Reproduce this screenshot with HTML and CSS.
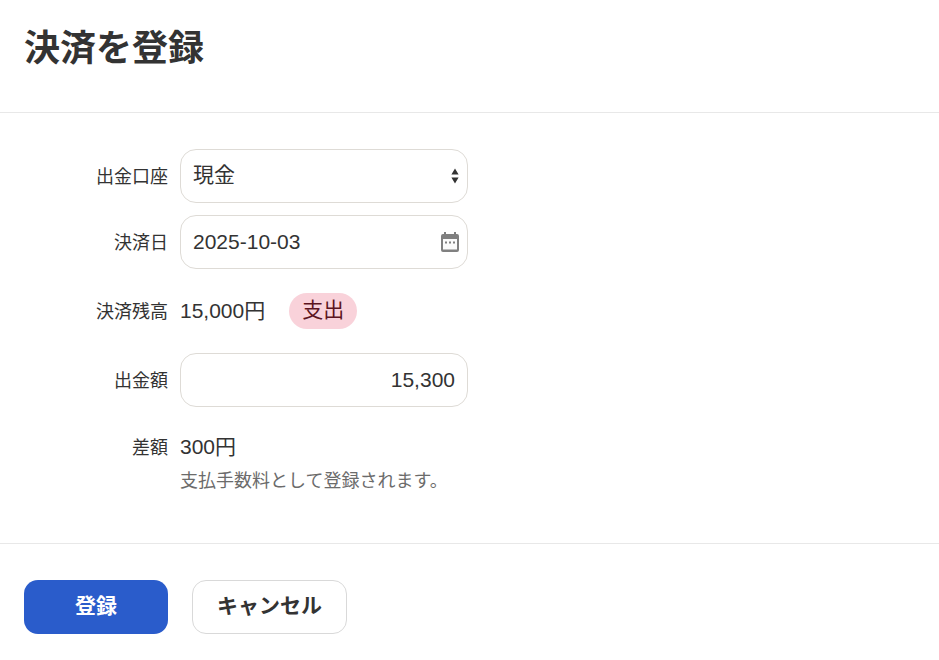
FILE: index.html
```html
<!DOCTYPE html>
<html lang="ja">
<head>
    <meta charset="UTF-8">
    <meta name="viewport" content="width=device-width, initial-scale=1.0">
    <title>決済を登録</title>
    <link rel="stylesheet" href="styles.css">
</head>
<body>
    <header class="page-header">
        <h1>決済を登録</h1>
    </header>
    <form class="form-body">
        <div class="row">
            <label class="row-label" for="account">出金口座</label>
            <div class="field">
                <select id="account" class="control control-select">
                    <option>現金</option>
                </select>
                <svg class="field-icon select-icon" width="8" height="16" viewBox="0 0 8 16">
                    <path d="M4 0.5 L7.6 6.5 H0.4 Z M0.4 9.5 H7.6 L4 15.5 Z" fill="#333"/>
                </svg>
            </div>
        </div>
        <div class="row">
            <label class="row-label" for="date">決済日</label>
            <div class="field">
                <input id="date" class="control" type="text" value="2025-10-03">
                <svg class="field-icon date-icon" width="18" height="20" viewBox="0 0 18 20">
                    <path d="M3 0 H5 V2 H13 V0 H15 V2 H16 A2 2 0 0 1 18 4 V18 A2 2 0 0 1 16 20 H2 A2 2 0 0 1 0 18 V4 A2 2 0 0 1 2 2 H3 Z" fill="#808080"/>
                    <path d="M2 7 H16 V17.5 H2 Z" fill="#fbfbfb"/>
                    <path d="M4 9.5 H6 V11.5 H4 Z M8 9.5 H10 V11.5 H8 Z M12 9.5 H14 V11.5 H12 Z" fill="#808080"/>
                </svg>
            </div>
        </div>
        <div class="row row-balance">
            <span class="row-label">決済残高</span>
            <span class="value">15,000円</span>
            <span class="badge">支出</span>
        </div>
        <div class="row">
            <label class="row-label" for="amount">出金額</label>
            <div class="field">
                <input id="amount" class="control amount" type="text" value="15,300">
            </div>
        </div>
        <div class="row row-diff">
            <span class="row-label">差額</span>
            <div>
                <div class="value">300円</div>
                <div class="help">支払手数料として登録されます。</div>
            </div>
        </div>
    </form>
    <footer class="page-footer">
        <button class="btn btn-primary" type="button">登録</button>
        <button class="btn btn-cancel" type="button">キャンセル</button>
    </footer>
</body>
</html>
```

FILE: styles.css
```css
body {
    margin: 0;
    font-family: "Liberation Sans", "Noto Sans CJK JP", sans-serif;
    color: #333;
    background: #fff;
}
.page-header {
    height: 112px;
    padding: 0 24px;
    border-bottom: 1px solid #e8e8e8;
}
h1 {
    margin: 0;
    padding-top: 24px;
    font-size: 36px;
    line-height: 50px;
    font-weight: 700;
}
.form-body {
    padding: 36px 0 49px;
    border-bottom: 1px solid #e8e8e8;
}
.row {
    display: flex;
    align-items: center;
    margin-bottom: 12px;
}
.row-label {
    width: 180px;
    padding: 2px 12px 0 0;
    box-sizing: border-box;
    text-align: right;
    font-size: 18px;
    line-height: 24px;
}
.field {
    position: relative;
    width: 288px;
}
.control {
    display: block;
    width: 100%;
    height: 54px;
    box-sizing: border-box;
    padding: 0 12px;
    border: 1px solid #dedbd6;
    border-radius: 16px;
    background: #fff;
    color: #333;
    font-family: inherit;
    font-size: 21px;
    appearance: none;
    outline: none;
}
.control-select {
    padding-bottom: 4px;
}
.amount {
    text-align: right;
}
.field-icon {
    position: absolute;
    top: 50%;
    transform: translateY(-50%);
    pointer-events: none;
}
.select-icon {
    right: 9px;
}
.date-icon {
    right: 9px;
}
.row-balance {
    height: 36px;
    margin: 24px 0;
}
.value {
    font-size: 21px;
    line-height: 28px;
}
.badge {
    margin-left: 24px;
    padding: 0 13px;
    height: 36px;
    line-height: 34px;
    border-radius: 18px;
    background: #f9d2da;
    color: #5c1420;
    font-size: 21px;
}
.row-diff {
    align-items: flex-start;
    margin: 26px 0 0;
}
.row-diff .row-label {
    padding-top: 1px;
    line-height: 28px;
}
.help {
    margin-top: 7px;
    font-size: 18px;
    line-height: 26px;
    color: #6b6b6b;
}
.page-footer {
    display: flex;
    gap: 24px;
    padding: 36px 24px 26px;
}
.btn {
    height: 54px;
    padding: 0 0 6px;
    border-radius: 14px;
    font-family: inherit;
    font-size: 21px;
    font-weight: 700;
    cursor: pointer;
}
.btn-primary {
    width: 144px;
    border: none;
    background: #2a5ccb;
    color: #fff;
}
.btn-cancel {
    width: 155px;
    border: 1px solid #d9d9d9;
    background: #fff;
    color: #333;
}
```
